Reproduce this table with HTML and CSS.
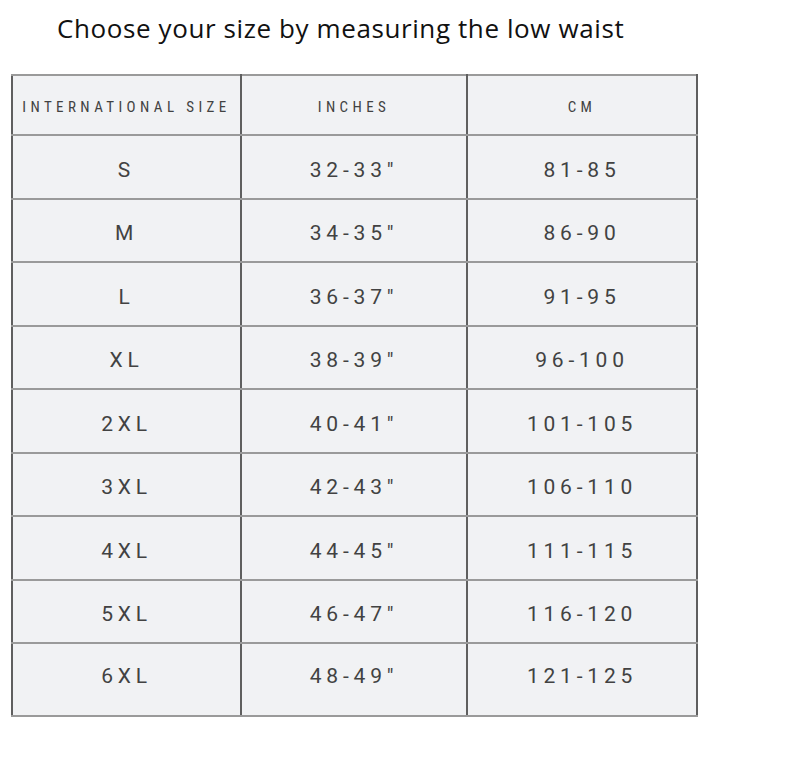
FILE: index.html
```html
<!DOCTYPE html>
<html>
<head>
<meta charset="utf-8">
<link rel="stylesheet" href="styles.css">
</head>
<body>
<h1 class="title">Choose your size by measuring the low waist</h1>
<table class="chart">
  <thead>
    <tr><th class="c1">INTERNATIONAL SIZE</th><th class="c2">INCHES</th><th class="c3">CM</th></tr>
  </thead>
  <tbody>
    <tr><td>S</td><td>32-33"</td><td>81-85</td></tr>
    <tr><td>M</td><td>34-35"</td><td>86-90</td></tr>
    <tr><td>L</td><td>36-37"</td><td>91-95</td></tr>
    <tr><td>XL</td><td>38-39"</td><td>96-100</td></tr>
    <tr><td>2XL</td><td>40-41"</td><td>101-105</td></tr>
    <tr><td>3XL</td><td>42-43"</td><td>106-110</td></tr>
    <tr><td>4XL</td><td>44-45"</td><td>111-115</td></tr>
    <tr><td>5XL</td><td>46-47"</td><td>116-120</td></tr>
    <tr class="last"><td>6XL</td><td>48-49"</td><td>121-125</td></tr>
  </tbody>
</table>
</body>
</html>
```
FILE: styles.css
```css
html, body {
  margin: 0;
  padding: 0;
  background: #ffffff;
}
.title {
  margin: 0;
  padding: 10px 0 0 57px;
  height: 37px;
  font-family: "Open Sans", sans-serif;
  font-weight: 400;
  font-size: 26px;
  letter-spacing: 0.6px;
  line-height: 37px;
  color: #111111;
}
.chart {
  margin: 27px 0 0 11px;
  border-collapse: collapse;
  border: 2px solid #5a5a5a;
  background: #f1f2f4;
  font-family: Roboto, "Liberation Sans", sans-serif;
  color: #424242;
}
.chart th, .chart td {
  text-align: center;
  padding: 0;
  border-left: 2px solid #5f5f5f;
  border-right: 2px solid #5f5f5f;
  border-top: 2px solid #9a9a9a;
  border-bottom: 2px solid #9a9a9a;
}
.chart th {
  height: 54px;
  padding-top: 4px;
  font-family: "Liberation Sans Narrow", "Roboto Condensed", Roboto, sans-serif;
  font-weight: 400;
  font-size: 15px;
  letter-spacing: 4.4px;
}
.c1 { width: 227px; }
.c2 { width: 224px; }
.c3 { width: 228px; }
.chart td {
  height: 55.5px;
  padding-top: 6px;
  font-size: 21px;
  letter-spacing: 4.8px;
}
.chart tr.last td {
  height: 64px;
  padding-top: 0;
  padding-bottom: 7px;
}
```
